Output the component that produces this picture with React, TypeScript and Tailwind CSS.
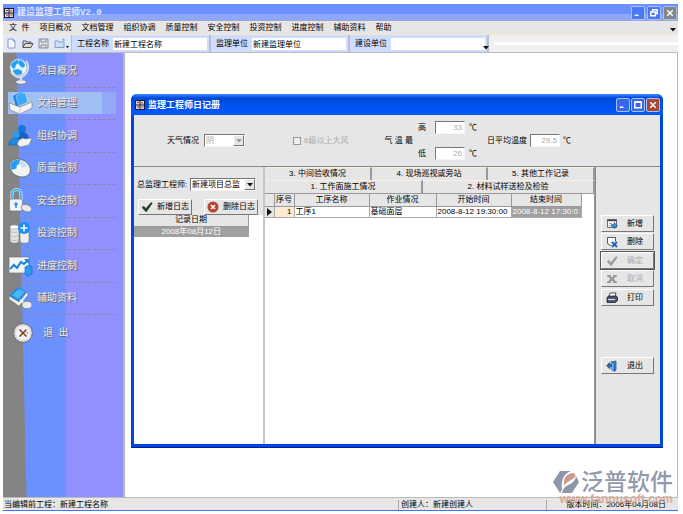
import React from 'react';
import clsx from 'clsx';

const MENU = ['文  件', '项目概况', '文档管理', '组织协调', '质量控制', '安全控制', '投资控制', '进度控制', '辅助资料', '帮助'];

const RAISED = 'border border-t-white border-l-white border-r-[#777] border-b-[#777] bg-[#e6e6e6]';
const SUNKEN = 'border border-t-[#777] border-l-[#777] border-r-[#f6f6f6] border-b-[#f6f6f6] bg-white';

/* ---------- sidebar icons ---------- */

const GlobeIcon = () => (
  <svg viewBox="0 0 26 28" className="w-[26px] h-7">
    <ellipse cx="13" cy="25" rx="5.500" ry="2.200" fill="#e8eaf0" stroke="#667" strokeWidth=".6" />
    <path d="M11.500 20h3v4h-3z" fill="#cfd3dc" />
    <path d="M18 4a10 10 0 0 1-6 16C8 20.500 5 18 3 15" fill="none" stroke="#dfe3ea" strokeWidth="1.800" />
    <circle cx="10.500" cy="10.500" r="8.500" fill="#e2f4ff" stroke="#9fb4c8" strokeWidth=".6" />
    <path d="M3 8c1-3 4-5 7-5l0 3-2 2-1 3-2 1zM11 3c3 0 6 3 6 6l-2 2-3-2-2-3zM5 13l5-1 4 2 0 3-4 1c-3 0-5-3-5-5z" fill="#22a2f4" />
  </svg>
);

const TrayIcon = () => (
  <svg viewBox="0 0 26 28" className="w-[26px] h-7">
    <path d="M3 15l4-7 12-2 5 7-11 5z" fill="#b9c4d0" />
    <path d="M5 7l9-4 3 11-9 4z" fill="#1a86e0" />
    <path d="M8 7l9-4 3 10-9 4z" fill="#3aa8f8" stroke="#cfeaff" strokeWidth=".5" />
    <path d="M1 14l11 4 12-5v6l-12 6-10-4z" fill="#f3f4f6" stroke="#777" strokeWidth=".6" />
    <path d="M12 18v7" stroke="#bbb" strokeWidth=".7" />
  </svg>
);

const PeopleIcon = () => (
  <svg viewBox="0 0 26 28" className="w-[26px] h-7">
    <circle cx="14" cy="7" r="4" fill="#1677d8" />
    <path d="M7 17c0-5 3-7 7-7s7 3 7 7z" fill="#1666c0" />
    <circle cx="8" cy="13" r="3.600" fill="#2f9bf0" />
    <path d="M1 23c0-5 3-7 7-7s7 3 7 7z" fill="#1f88e6" stroke="#0b50a8" strokeWidth=".5" />
    <path d="M11 18l4-2 2 1 7-1-3 7-9 2-3-3z" fill="#f2f4f8" stroke="#778" strokeWidth=".6" />
  </svg>
);

const MouseIcon = () => (
  <svg viewBox="0 0 26 28" className="w-[26px] h-7">
    <ellipse cx="12" cy="14" rx="11" ry="8.500" transform="rotate(28 12 14)" fill="#f1f2f5" stroke="#666" strokeWidth=".8" />
    <path d="M3 9c2-3 6-4 9-3l-2 8-7 2c-1-2-1-5 0-7z" fill="#2a9cf2" />
    <path d="M12 6c4 1 6 4 7 6l-6 2-3 0z" fill="#bfe2fb" />
    <circle cx="11" cy="13" r="2.500" fill="#fff" />
  </svg>
);

const LockIcon = () => (
  <svg viewBox="0 0 26 28" className="w-[26px] h-7">
    <path d="M4 14V7a4.500 4.500 0 0 1 9 0v7" fill="none" stroke="#d8eefc" strokeWidth="3" />
    <path d="M4 12V7a4.500 4.500 0 0 1 9 0v5" fill="none" stroke="#2a9cf2" strokeWidth="1.400" />
    <rect x="1.500" y="12" width="13" height="12" rx="2" fill="#f2f3f6" stroke="#777" strokeWidth=".7" />
    <circle cx="8" cy="17" r="1.700" fill="#2a8ce6" />
    <path d="M7.300 17h1.400v4H7.300z" fill="#2a8ce6" />
    <ellipse cx="18.500" cy="21" rx="5.500" ry="3.500" transform="rotate(20 18 21)" fill="#e4e7ec" stroke="#777" strokeWidth=".7" />
  </svg>
);

const CoinsIcon = () => (
  <svg viewBox="0 0 26 28" className="w-[26px] h-7">
    <path d="M2 8v14c0 3 9 3 9 0V8z" fill="#dfe2e6" stroke="#777" strokeWidth=".6" />
    <ellipse cx="6.500" cy="8" rx="4.500" ry="2" fill="#fff" stroke="#999" strokeWidth=".5" />
    <path d="M12 13v9c0 3 9 3 9 0v-9z" fill="#eceef0" stroke="#777" strokeWidth=".6" />
    <path d="M2 12c1 2 8 2 9 0M2 16c1 2 8 2 9 0M2 20c1 2 8 2 9 0" fill="none" stroke="#aaa" strokeWidth=".6" />
    <circle cx="16" cy="9" r="6" fill="#1c90f0" />
    <path d="M16 5.500v7M12.500 9h7" stroke="#fff" strokeWidth="1.600" />
  </svg>
);

const ChartIcon = () => (
  <svg viewBox="0 0 26 28" className="w-[26px] h-7">
    <path d="M1 5h20v16H1z" fill="#f2f5f8" stroke="#777" strokeWidth=".7" />
    <path d="M2 17l4-4 3 3 4-6 3 2 4-4" fill="none" stroke="#1a82de" strokeWidth="2" />
    <path d="M16 7h5v5z" fill="#1a82de" />
    <path d="M17 15l4-2 3 2v7l-4 2-3-2z" fill="#2a9cf2" stroke="#0e5cb0" strokeWidth=".6" />
  </svg>
);

const BookIcon = () => (
  <svg viewBox="0 0 26 28" className="w-[26px] h-7">
    <path d="M1 12L10 3l9 5-8 10z" fill="#1c8cea" />
    <path d="M4 11l7-6 6 3-7 7z" fill="#4ab6fa" />
    <path d="M1 12l10 6 8-10 1 3-9 11L1 15z" fill="#f3f4f6" stroke="#777" strokeWidth=".6" />
    <path d="M12 16l5 4" stroke="#eee" strokeWidth="2.400" />
    <ellipse cx="19" cy="21" rx="5" ry="3.800" fill="#e8eaee" stroke="#777" strokeWidth=".7" />
  </svg>
);

const ExitRoundIcon = () => (
  <svg viewBox="0 0 20 20" className="w-5 h-5">
    <circle cx="10" cy="10" r="9.300" fill="#f4f4f4" stroke="#6d6d6d" strokeWidth="1" />
    <circle cx="10" cy="10" r="7.500" fill="none" stroke="#d8d8d8" />
    <path d="M6.500 6.500l7 7M13.500 6.500l-7 7" stroke="#7b3b22" strokeWidth="1.500" />
    <path d="M13 10l2-1.500v3z" fill="#e08a3c" />
  </svg>
);

const NAV = [
  { label: '项目概况', icon: GlobeIcon },
  { label: '文档管理', icon: TrayIcon, active: true },
  { label: '组织协调', icon: PeopleIcon },
  { label: '质量控制', icon: MouseIcon },
  { label: '安全控制', icon: LockIcon },
  { label: '投资控制', icon: CoinsIcon },
  { label: '进度控制', icon: ChartIcon },
  { label: '辅助资料', icon: BookIcon },
];

/* ---------- small icons ---------- */

const AppIcon = () => (
  <svg viewBox="0 0 10 10" className="w-[10px] h-[10px] shrink-0">
    <path d="M0 0h10v10H0z" fill="#1a1a3a" />
    <path d="M1 1h3.500v3.500H1zM5.500 1H9v3.500H5.500zM1 5.500h3.500V9H1zM5.500 5.500H9V9H5.500z" fill="#dcd8d0" />
    <path d="M2 2.500h2M6 3h2M2 7h2M6.500 7h2" stroke="#a03030" />
  </svg>
);

const AddIcon = () => (
  <svg viewBox="0 0 12 12" className="w-3 h-3">
    <path d="M1.500 1.500h9v8h-9z" fill="#fff" stroke="#445" strokeWidth=".8" />
    <path d="M1.500 2.500h9" stroke="#445" strokeWidth="1.500" />
    <path d="M3 5.500h3M3 7.500h2" stroke="#888" strokeWidth=".8" />
    <path d="M5.500 6.500H8v-2l3.500 3L8 10.500v-2H5.500z" fill="#3a98ee" stroke="#134" strokeWidth=".5" />
  </svg>
);

const DeleteIcon = () => (
  <svg viewBox="0 0 12 12" className="w-3 h-3">
    <path d="M1.500 1.500h8v8h-5l-3-2z" fill="#fff" stroke="#445" strokeWidth=".9" />
    <path d="M5.500 5.500h6v6h-6z" fill="#a8d4f8" />
    <path d="M6 6l5 5M11 6l-5 5" stroke="#0c4c9c" strokeWidth="1.400" />
  </svg>
);

const CheckIcon = ({ color }: { color: string }) => (
  <svg viewBox="0 0 12 12" className="w-3 h-3">
    <path d="M1 6.500l2-1.200 1.800 2.400L10 1.500l1.300.7L5.200 11z" fill={color} stroke={color} strokeWidth=".5" />
  </svg>
);

const CancelIcon = () => (
  <svg viewBox="0 0 12 12" className="w-3 h-3">
    <path d="M1 2h4v1.500l1 1 1-1V2h4v1.500h-1L7.800 6 10 8.500h1V10H7V8.500l-1-1-1 1V10H1V8.500h1L4.200 6 2 3.500H1z" fill="#999" />
  </svg>
);

const PrintIcon = () => (
  <svg viewBox="0 0 12 12" className="w-3 h-3">
    <path d="M4 1h6L9 5H2.500z" fill="#fff" stroke="#223" strokeWidth=".8" />
    <path d="M1 5.500L2.500 4h8L11.500 5.500v3l-2 2H1z" fill="#4a5266" stroke="#112" strokeWidth=".7" />
    <path d="M2 7.500h7" stroke="#dde" strokeWidth="1.200" />
  </svg>
);

const DoorIcon = () => (
  <svg viewBox="0 0 12 12" className="w-3 h-3">
    <path d="M5 2l5-1v9l-2 1.500V4z" fill="#3a8ee8" stroke="#124a90" strokeWidth=".7" />
    <path d="M5 2l3 1.500V11L5 9.500z" fill="#6db4fa" stroke="#124a90" strokeWidth=".5" />
    <path d="M5.500 4.500H3.500v-2L.500 5.800l3 3v-2h2z" fill="#2a62b8" stroke="#123" strokeWidth=".4" />
  </svg>
);

const RedCrossIcon = () => (
  <svg viewBox="0 0 12 12" className="w-3 h-3">
    <circle cx="6" cy="6" r="5.500" fill="#b8432f" />
    <path d="M4 4l4 4M8 4l-4 4" stroke="#fff" strokeWidth="1.600" />
  </svg>
);

const DownArrow = ({ color = '#111' }: { color?: string }) => (
  <svg viewBox="0 0 6 4" className="w-[6px] h-1">
    <path d="M0 0h6L3 3.500z" fill={color} />
  </svg>
);

const TOOL_ICONS = [
  { label: '新建', d: 'M2 1h5l2 2v7H2zM7 1v2h2', fill: '#f4f8ff', stroke: '#7c9ccc' },
  { label: '打开', d: 'M1 9.500V3h3l1 1h4v1.500M1 9.500l2-4h8l-2 4z', fill: '#dddcd0', stroke: '#555' },
  { label: '保存', d: 'M1 1h9v9H1zM3 1v3h5V1M3 10V7h5v3', fill: '#dfe2e6', stroke: '#8a8f98' },
  { label: '目录', d: 'M1 9.500V3h3l1 1h5v5.500zM8 2l2-1v2', fill: '#cfe0f4', stroke: '#7ca0cc' },
];

/* ---------- pieces ---------- */

type WinKind = 'min' | 'restore' | 'max' | 'close';

const WIN_PATH: Record<WinKind, string> = {
  min: 'M3 9h4',
  restore: 'M5 5V3h5v4H8M3 5.500h5V9.500H3z',
  max: 'M3 3.500h7v6H3zM3 3h7',
  close: 'M3.500 3.500l6 6M9.500 3.500l-6 6',
};

const WinButton = ({ kind, className }: { kind: WinKind; className: string }) => (
  <button aria-label={kind} className={clsx('w-[14px] h-[14px] border border-[#a8c0f8] rounded-[2px] flex items-center justify-center', className)}>
    <svg viewBox="0 0 13 13" className="w-3 h-3">
      <path d={WIN_PATH[kind]} fill="none" stroke="#fff" strokeWidth="1.600" />
    </svg>
  </button>
);

const ToolbarField = ({ id, label, value }: { id: string; label: string; value: string }) => (
  <div className="flex items-center h-full w-[139px] bg-[#cddcff] border-r-2 border-[#b9bccc] pl-[5px] pr-[2px]">
    <label htmlFor={id} className="shrink-0 w-9">{label}</label>
    <input id={id} defaultValue={value} className="min-w-0 flex-1 h-3 px-[1px] bg-white" />
  </div>
);

interface DropProps {
  id: string;
  value: string;
  className: string;
  disabled?: boolean;
}

const DropDown = ({ id, value, className, disabled }: DropProps) => (
  <div className={clsx('relative h-[13px]', SUNKEN, className)}>
    <select id={id} disabled={disabled} className={clsx('block appearance-none w-full h-full pl-[1px] leading-[11px]', disabled && 'text-[#aaa] opacity-100')}>
      <option>{value}</option>
    </select>
    <span className={clsx('absolute right-0 top-0 bottom-0 w-[11px] flex items-center justify-center pointer-events-none', RAISED)}>
      <DownArrow color={disabled ? '#999' : '#111'} />
    </span>
  </div>
);

const TempInput = ({ id, value }: { id: string; value: string }) => (
  <input id={id} disabled defaultValue={value} className={clsx('w-[30px] h-[13px] pr-[2px] text-right text-[#aaa]', SUNKEN)} />
);

interface SideButtonProps {
  label: string;
  icon: React.ReactNode;
  disabled?: boolean;
  className?: string;
}

const SideButton = ({ label, icon, disabled, className }: SideButtonProps) => (
  <button disabled={disabled} className={clsx('w-full h-[17px] flex items-center pl-1 gap-[9px]', RAISED, disabled && 'text-[#aaa]', className)}>
    {icon}
    {label}
  </button>
);

const NAV_TEXT = 'text-[10px] leading-3 font-medium whitespace-pre text-[#dedee2] [text-shadow:1px_1px_0_#666a80]';

const Sidebar = () => (
  <nav className="w-[122px] shrink-0 pt-[2px] pl-[5px] border-r-2 border-[#b8b8b8] bg-[linear-gradient(88.7deg,#848484_23px,transparent_24px),linear-gradient(90deg,#6b90ff_61px,#9090ff_64px)]">
    <ul className="flex flex-col h-[260px]">
      {NAV.map(({ label, icon: Icon, active }) => (
        <li key={label} className="flex-1 min-h-0 flex items-center">
          <button className="w-[108px] h-full flex items-center text-left border-b border-dashed border-[#8587a8]">
            <span className={clsx('w-full h-[22px] flex items-center gap-[3px]', active && 'bg-[linear-gradient(90deg,#a0bff4_94px,#94a8f8_94px)]')}>
              <Icon />
              <span className={NAV_TEXT}>{label}</span>
            </span>
          </button>
        </li>
      ))}
    </ul>
    <button className="mt-2 ml-[5px] flex items-center gap-[10px] h-5">
      <ExitRoundIcon />
      <span className={NAV_TEXT}>{'退  出'}</span>
    </button>
  </nav>
);

const WeatherPanel = () => (
  <div className="h-[52px] flex items-center pl-[33px] border-b border-[#888] bg-[#e6e6e6]">
    <label htmlFor="weather" className="mr-[5px]">天气情况</label>
    <DropDown id="weather" value="阴" className="w-[41px]" disabled />
    <label className="ml-12 flex items-center gap-[3px] text-[#aaa]">
      <input type="checkbox" disabled className="appearance-none w-2 h-2 border border-[#999] bg-[#eee]" />
      6级以上大风
    </label>
    <span className="ml-9 whitespace-pre">{'气 温 最'}</span>
    <div className="ml-[5px] flex flex-col gap-[13px]">
      <div className="flex items-center gap-[9px]">
        <label htmlFor="high">高</label>
        <span className="flex items-center gap-1"><TempInput id="high" value="33" />℃</span>
      </div>
      <div className="flex items-center gap-[9px]">
        <label htmlFor="low">低</label>
        <span className="flex items-center gap-1"><TempInput id="low" value="26" />℃</span>
      </div>
    </div>
    <label htmlFor="avg" className="ml-[10px] mr-[3px]">日平均温度</label>
    <span className="flex items-center gap-[3px]"><TempInput id="avg" value="29.5" />℃</span>
  </div>
);

const DiaryPanel = () => (
  <div className="w-[129px] shrink-0 flex flex-col bg-white">
    <div className="h-12 shrink-0 bg-[#e6e6e6] pt-[11px] pl-[3px]">
      <div className="flex items-center">
        <label htmlFor="engineer" className="w-[53px] whitespace-nowrap">总监理工程师:</label>
        <DropDown id="engineer" value="新建项目总监" className="w-[66px]" />
      </div>
      <div className="flex gap-3 mt-2 pl-[1px]">
        <button className={clsx('w-[54px] h-4 flex items-center justify-center gap-1', RAISED)}>
          <CheckIcon color="#1d3a24" />新增日志
        </button>
        <button className={clsx('w-[54px] h-4 flex items-center justify-center gap-1', RAISED)}>
          <RedCrossIcon />删除日志
        </button>
      </div>
    </div>
    <table className="w-[115px] text-center">
      <thead>
        <tr><th className="h-[11px] p-0 font-normal bg-[#e6e6e6] border-b border-r border-[#999]">记录日期</th></tr>
      </thead>
      <tbody>
        <tr><td className="h-[11px] p-0 bg-[#a0a0a0] text-white">2008年08月12日</td></tr>
      </tbody>
    </table>
  </div>
);

const TAB = 'h-full flex items-center justify-center border-r-2 border-r-[#999] border-t border-t-[#f6f0e4]';

const TH = 'p-0 h-[12px] font-normal bg-[#e6e6e6] border-r border-b border-[#999]';
const TD = 'p-0 h-[11px] border-r border-b border-[#aaa] whitespace-nowrap overflow-hidden';

const WorkPanel = () => (
  <div className="flex-1 min-w-0 flex flex-col border-l-2 border-[#c4c4c4]">
    <div className="h-[13px] shrink-0 flex bg-[#e6e6e6]">
      <button className={clsx(TAB, 'w-[107px]')}>3. 中间验收情况</button>
      <button className={clsx(TAB, 'w-[116px]')}>4. 现场巡视或旁站</button>
      <button className={clsx(TAB, 'flex-1')}>5. 其他工作记录</button>
    </div>
    <div className="h-[13px] shrink-0 flex bg-[#e6e6e6]">
      <button className={clsx(TAB, 'w-[158px]')}>1. 工作面施工情况</button>
      <button className={clsx(TAB, 'flex-1')}>2. 材料试样送检及检验</button>
    </div>
    <div className="flex-1 bg-white border-t border-[#999] border-r">
      <table className="table-fixed w-[316px]">
        <colgroup>
          <col className="w-[9px]" />
          <col className="w-5" />
          <col className="w-[75px]" />
          <col className="w-[67px]" />
          <col className="w-[75px]" />
          <col className="w-[70px]" />
        </colgroup>
        <thead>
          <tr>
            <th className={TH} />
            <th className={TH}>序号</th>
            <th className={TH}>工序名称</th>
            <th className={TH}>作业情况</th>
            <th className={TH}>开始时间</th>
            <th className={TH}>结束时间</th>
          </tr>
        </thead>
        <tbody>
          <tr>
            <td className={clsx(TD, 'bg-[#e6e6e6]')}>
              <svg viewBox="0 0 5 8" className="w-[5px] h-2 mx-auto"><path d="M0 0l5 4-5 4z" fill="#111" /></svg>
            </td>
            <td className={clsx(TD, 'bg-[#ffecd0] text-right pr-[2px]')}>1</td>
            <td className={clsx(TD, 'pl-[1px]')}>工序1</td>
            <td className={clsx(TD, 'pl-[1px]')}>基础面层</td>
            <td className={clsx(TD, 'pl-[1px]')}>2008-8-12 19:30:00</td>
            <td className={clsx(TD, 'pl-[1px] bg-[#a0a0a0] text-white')}>2008-8-12 17:30:0</td>
          </tr>
        </tbody>
      </table>
    </div>
  </div>
);

const ActionPanel = () => (
  <div className="w-[65px] shrink-0 bg-[#e6e6e6] border-l border-[#888] pt-12 pl-[5px] pr-[6px] flex flex-col">
    <SideButton label="新增" icon={<AddIcon />} />
    <SideButton label="删除" icon={<DeleteIcon />} className="mt-[1px]" />
    <SideButton label="确定" icon={<CheckIcon color="#999" />} disabled className="mt-[2px] outline outline-[#555]" />
    <SideButton label="取消" icon={<CancelIcon />} disabled className="mt-[1px]" />
    <SideButton label="打印" icon={<PrintIcon />} className="mt-[2px]" />
    <SideButton label="退出" icon={<DoorIcon />} className="mt-[51px]" />
  </div>
);

const DiaryWindow = () => (
  <section className="mt-[41px] ml-[6px] mr-[14px] h-[354px] flex flex-col rounded-t-md bg-[#0046e0] px-[3px] pb-[3px] border-b border-[#001a9c] overflow-hidden">
    <header className="h-[21px] shrink-0 -mx-[3px] pl-1 pr-[3px] flex items-center bg-[linear-gradient(180deg,#3a8cff_0px,#0048d8_4px,#0054f4_13px,#0058ff_100%)]">
      <AppIcon />
      <h2 className="ml-[3px] flex-1 text-[9px] font-bold text-white">监理工程师日记册</h2>
      <div className="flex gap-[1px]">
        <WinButton kind="min" className="bg-[#3868f0]" />
        <WinButton kind="max" className="bg-[#3868f0]" />
        <WinButton kind="close" className="bg-[#a84838]" />
      </div>
    </header>
    <WeatherPanel />
    <div className="flex-1 min-h-0 flex">
      <DiaryPanel />
      <WorkPanel />
      <ActionPanel />
    </div>
  </section>
);

const Watermark = () => (
  <div className="absolute right-[5px] bottom-[7px] pointer-events-none">
    <div className="flex items-center gap-[2px]">
      <svg viewBox="0 0 26 24" className="w-[26px] h-6">
        <path d="M7 1h11C10 4 8 11 9 20l-2 3L0 12z" fill="#8e96aa" />
        <path d="M11 16C10 8 14 3 20 3c2 0 3 3 1 5-3 3-7 3-10 8z" fill="#c89c8c" />
        <path d="M22 4l4 8-7 11H9c2-9 8-7 12-12 2-2 2-5 1-7z" fill="#8e96aa" />
      </svg>
      <span className="text-[23px] leading-6 font-medium text-[#9299ab]">泛普软件</span>
    </div>
    <div className="text-[12px] leading-[10px] text-right font-bold text-[#d4a28e] opacity-80">www.fanpusoft.com</div>
  </div>
);

const App: React.FC = () => (
  <div className="min-h-screen bg-white pt-1 pl-[3px] pr-[5px] text-[8px] leading-[10px] text-black font-['Liberation_Sans','Noto_Sans_CJK_SC',sans-serif]">
    <div className="relative">
      <header className="h-[17px] flex items-center pl-[1px] pr-[1px] bg-[linear-gradient(180deg,#6b90ff_60%,#8ea8ff_60%)]">
        <AppIcon />
        <h1 className="ml-[3px] flex-1 text-[9px] font-bold text-[#dfe6ff] font-['Liberation_Mono','Noto_Sans_CJK_SC',monospace]">建设监理工程师V2.0</h1>
        <div className="flex gap-[2px]">
          <WinButton kind="min" className="bg-[#4a78f4]" />
          <WinButton kind="restore" className="bg-[#4a78f4]" />
          <WinButton kind="close" className="bg-[#858585]" />
        </div>
      </header>

      <nav className="h-[14px] flex items-center gap-[10px] pl-[6px] bg-[#e6e6e6] border-y border-[#f6e6cc]">
        {MENU.map((item) => (
          <button key={item} className="whitespace-pre">{item}</button>
        ))}
        <span className="ml-auto self-end mb-[2px] mr-[2px]"><DownArrow /></span>
      </nav>

      <div className="h-[18px] flex bg-[#f0f0f0] border-b border-[#bbb]">
        <div className="w-[69px] shrink-0 flex items-center gap-1 pl-[3px] bg-[#e2e8f8] border-r border-[#b9bccc]">
          {TOOL_ICONS.map(({ label, d, fill, stroke }) => (
            <button key={label} aria-label={label}>
              <svg viewBox="0 0 12 11" className="w-3 h-[11px]"><path d={d} fill={fill} stroke={stroke} /></svg>
            </button>
          ))}
          <span className="self-end mb-1 -ml-1"><svg viewBox="0 0 3 2" className="w-[3px] h-[2px]"><path d="M0 0h3L1.500 2z" /></svg></span>
        </div>
        <ToolbarField id="project" label="工程名称" value="新建工程名称" />
        <ToolbarField id="supervisor" label="监理单位" value="新建监理单位" />
        <ToolbarField id="builder" label="建设单位" value="" />
        <div className="flex-1 flex items-center gap-[5px]">
          <span className="self-end mb-[2px] -ml-[6px]"><DownArrow /></span>
          <div className="h-[3px] w-full bg-white" />
        </div>
      </div>

      <main className="h-[444px] flex border-r border-[#bbb]">
        <Sidebar />
        <div className="flex-1 min-w-0 bg-white">
          <DiaryWindow />
        </div>
      </main>

      <footer className="relative z-10 h-[14px] flex items-center pt-[1px] border-t border-t-[#bbb] border-b border-b-[#3b78ff] bg-[#e6e6e6]">
        <div className="w-[396px] pl-[1px] border-r border-[#aaa]">当编辑前工程：新建工程名称</div>
        <div className="w-[148px] pl-[2px] border-r border-[#aaa]">创建人：新建创建人</div>
        <div className="flex-1 pr-3 text-right">版本时间：2006年04月08日</div>
      </footer>
      <div className="absolute inset-0 z-20 pointer-events-none">
        <Watermark />
      </div>
    </div>
  </div>
);

export default App;
